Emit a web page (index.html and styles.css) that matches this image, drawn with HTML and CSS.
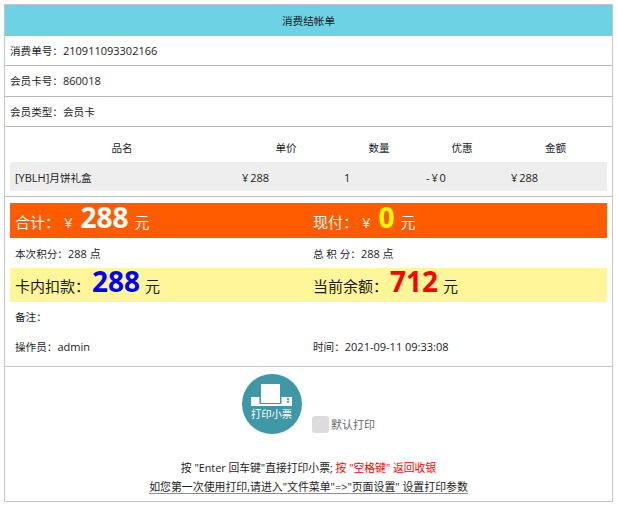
FILE: index.html
```html
<!DOCTYPE html>
<html lang="zh-CN">
<head>
<meta charset="utf-8">
<title>消费结帐单</title>
<link rel="stylesheet" href="styles.css">
</head>
<body>
<div class="bill">
  <div class="title">消费结帐单</div>
  <div class="row"><span class="lab">消费单号：</span>210911093302166</div>
  <div class="row"><span class="lab">会员卡号：</span>860018</div>
  <div class="row"><span class="lab">会员类型：会员卡</span></div>
  <div class="items">
    <div class="item-grid item-head">
      <span>品名</span><span>单价</span><span>数量</span><span>优惠</span><span>金额</span>
    </div>
    <div class="item-grid item-line">
      <span>[YBLH]<span class="lab">月饼礼盒</span></span><span>¥ 288</span><span>1</span><span>- ¥ 0</span><span>¥ 288</span>
    </div>
  </div>
  <div class="summary">
    <div class="band orange">
      <div class="cell">合计： ¥<b class="num white">288</b> 元</div>
      <div class="cell">现付： ¥<b class="num yellow">0</b> 元</div>
    </div>
    <div class="pair points">
      <div class="cell"><span class="lab">本次积分：</span>288 点</div>
      <div class="cell"><span class="lab">总 积 分：</span>288 点</div>
    </div>
    <div class="band pale">
      <div class="cell">卡内扣款：<b class="num blue flush">288</b> 元</div>
      <div class="cell">当前余额：<b class="num red flush">712</b> 元</div>
    </div>
    <div class="pair remark">
      <div class="cell"><span class="lab">备注：</span></div>
    </div>
    <div class="pair operator">
      <div class="cell"><span class="lab">操作员：</span>admin</div>
      <div class="cell"><span class="lab">时间：</span>2021-09-11 09:33:08</div>
    </div>
  </div>
  <div class="foot">
    <div class="actions">
      <div class="print">
        <svg class="printer" viewBox="0 0 41 22" aria-hidden="true">
          <path fill="#fff" d="M10 0h19v19H10z"/>
          <path fill="#fff" d="M0 13h8.500v7h22v-7H41v9H0z"/>
          <path fill="#3f98a5" d="M36 14.300h2V16h-2zM36 16.800h2v1.700h-2z"/>
        </svg>
        <span class="print-label">打印小票</span>
      </div>
      <label class="default"><span class="check"></span>默认打印</label>
    </div>
    <div class="hint">按 "Enter 回车键"直接打印小票; <span class="alert">按 "空格键" 返回收银</span></div>
    <div class="setup">如您第一次使用打印,请进入"文件菜单"=>"页面设置" 设置打印参数</div>
  </div>
</div>
</body>
</html>
```
FILE: styles.css
```css
* { box-sizing: border-box; }
html, body { margin: 0; padding: 0; background: #fff; }
body {
  padding: 4px 4px 0;
  font-family: "Open Sans", "Noto Sans CJK SC", sans-serif;
  font-size: 11px;
  color: #1c1c1c;
}
.lab { font-size: 10.600px; }
.bill {
  width: 609px;
  height: 498px;
  border: 1px solid #c4c4c4;
  display: flex;
  flex-direction: column;
}
.title {
  height: 31px;
  background: #6dd2e3;
  border-bottom: 1px solid #b4b4b4;
  display: flex;
  align-items: center;
  justify-content: center;
  font-size: 10.600px;
}
.row {
  height: 30.300px;
  padding-left: 5px;
  border-bottom: 1px solid #b8b8b8;
  display: flex;
  align-items: center;
}
.items {
  height: 70.400px;
  padding: 5px 5px 0;
  border-bottom: 1px solid #c0c0c0;
}
.item-grid {
  display: grid;
  grid-template-columns: 224px 104px 82px 84px 103px;
  align-items: center;
}
.item-head { height: 30px; padding-top: 2px; text-align: center; font-size: 10.600px; }
.item-line {
  height: 29.500px;
  padding-top: 1px;
  background: #eeeeee;
  text-align: left;
  word-spacing: -1px;
}
.item-line > span { padding-left: 6px; }
.item-line > span:nth-child(1) { padding-left: 5px; }
.item-line > span:nth-child(2) { padding-left: 8px; }
.item-line > span:nth-child(5) { padding-left: 7px; }
.summary {
  height: 169.400px;
  padding: 6px 5px 0;
  border-bottom: 1px solid #c4c4c4;
}
.band, .pair {
  display: grid;
  grid-template-columns: 298px 299px;
}
.band {
  height: 34.300px;
  font-size: 15px;
  align-items: end;
  line-height: 26px;
  padding-bottom: 3px;
}
.orange { background: #ff5c00; color: #fff; }
.pale { background: #fff599; color: #1c1c1c; }
.cell { padding-left: 5px; white-space: nowrap; }
.num { font-size: 28px; font-weight: 700; line-height: 26px; margin: 0 2px 0 8px; }
.flush { margin: 0 1px 0 2px; }
.white { color: #fff; }
.yellow { color: #ffff00; }
.blue { color: #0000ff; }
.red { color: #ff0000; }
.pair { align-items: center; }
.points { height: 30px; }
.remark { height: 30px; }
.operator { height: 30px; }
.foot {
  flex: 1;
  display: flex;
  flex-direction: column;
  align-items: center;
}
.actions {
  height: 92.500px;
  width: 100%;
  position: relative;
  padding: 7px 0 0 236.500px;
}
.print {
  width: 60px;
  height: 60px;
  border-radius: 50%;
  background: #3f98a5;
  color: #fff;
  display: flex;
  flex-direction: column;
  align-items: center;
  padding-top: 10px;
}
.printer { width: 41px; height: 22px; display: block; }
.print-label { font-size: 10.300px; line-height: 15px; margin-top: 1px; }
.default {
  position: absolute;
  left: 307px;
  top: 49px;
  display: flex;
  align-items: center;
  color: #666;
  font-size: 11px;
}
.check {
  width: 17px;
  height: 17px;
  background: #dcdcdc;
  border-radius: 3px;
  margin-right: 2px;
}
.hint { line-height: 18px; font-size: 10.800px; }
.alert { color: #f00; }
.setup {
  line-height: 13px;
  font-size: 10.900px;
  border-bottom: 1px solid #5b9bd5;
  margin-top: 3px;
}
```
